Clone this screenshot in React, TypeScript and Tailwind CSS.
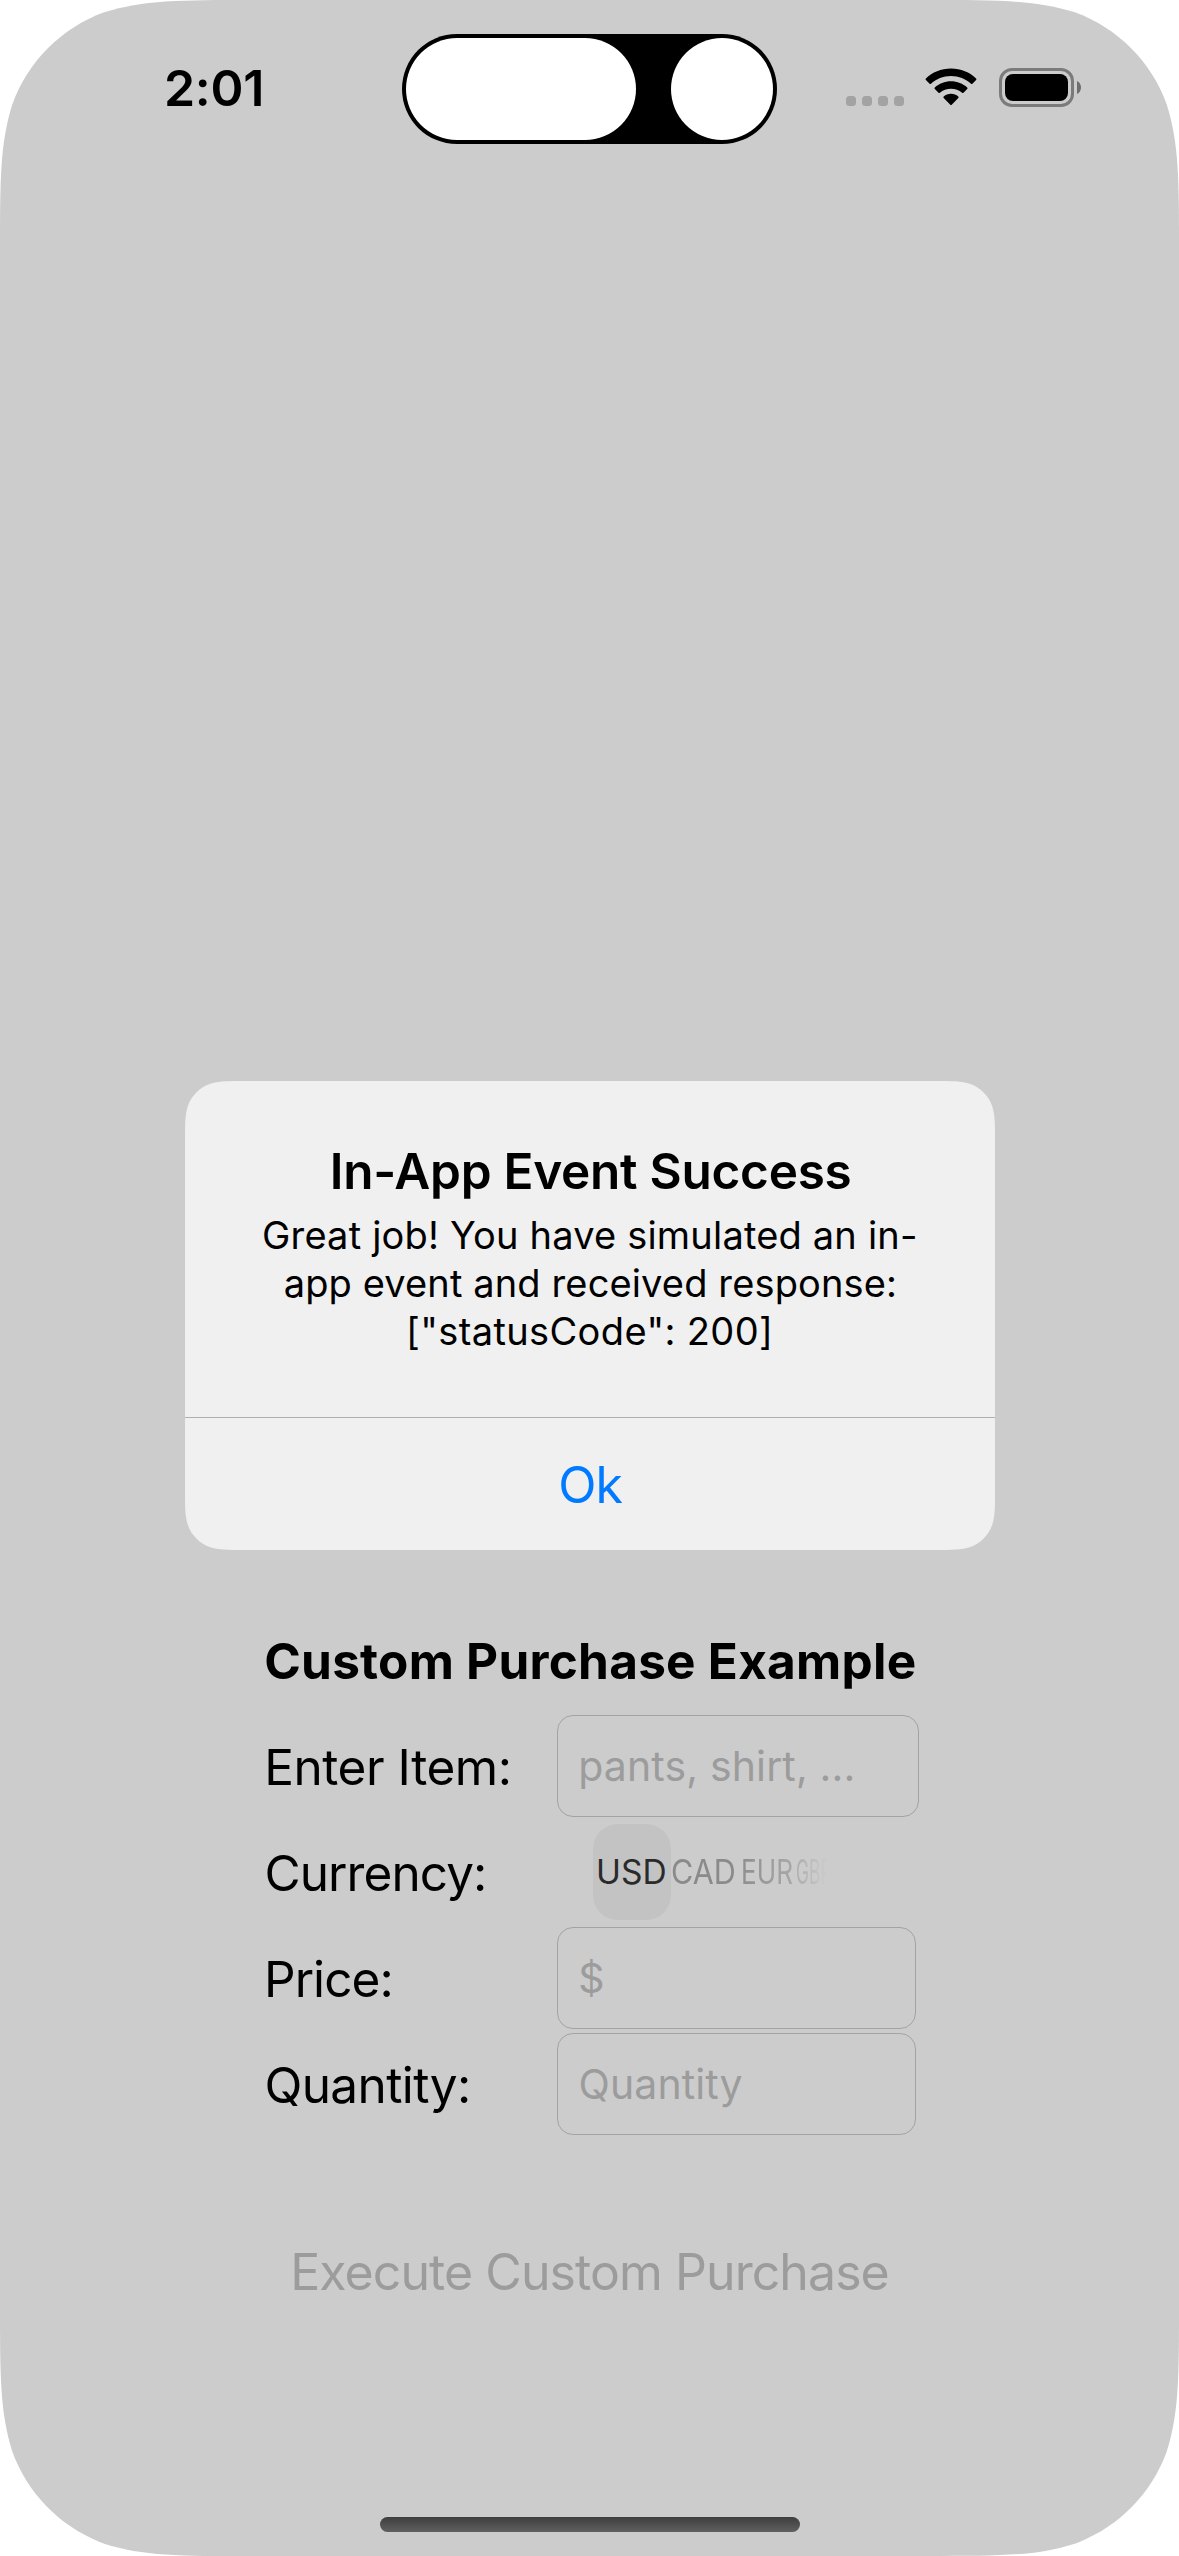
import type { CSSProperties, ReactNode } from "react";

/** Continuous-curvature rounded rectangle, as iOS draws it. */
function squircle(w: number, h: number, r: number): CSSProperties {
  const [a, b, c, d, e, f, g] = [
    1.528665, 1.08849296, 0.86840694, 0.63149379, 0.07491139, 0.37282383, 0.16905956,
  ].map((k) => +(k * r).toFixed(2));
  const path = [
    `M${a} 0H${w - a}`,
    `C${w - b} 0 ${w - c} 0 ${w - d} ${e}C${w - f} ${g} ${w - g} ${f} ${w - e} ${d}C${w} ${c} ${w} ${b} ${w} ${a}`,
    `V${h - a}`,
    `C${w} ${h - b} ${w} ${h - c} ${w - e} ${h - d}C${w - g} ${h - f} ${w - f} ${h - g} ${w - d} ${h - e}C${w - c} ${h} ${w - b} ${h} ${w - a} ${h}`,
    `H${a}`,
    `C${b} ${h} ${c} ${h} ${d} ${h - e}C${f} ${h - g} ${g} ${h - f} ${e} ${h - d}C0 ${h - c} 0 ${h - b} 0 ${h - a}`,
    `V${a}`,
    `C0 ${b} 0 ${c} ${e} ${d}C${g} ${f} ${f} ${g} ${d} ${e}C${c} 0 ${b} 0 ${a} 0Z`,
  ].join("");
  return { clipPath: `path("${path}")` };
}

function WifiIcon() {
  return (
    <svg className="h-[38px] w-[52px]" viewBox="0 0 52 38" fill="#000">
      <path d="M26 0.6C16.2 0.6 7.2 4.4 0.9 10.5Q0.2 11.3 0.9 12L4.6 15.8Q5.3 16.4 6 15.8C11.2 10.9 18.2 8 26 8C33.8 8 40.8 10.9 46 15.8Q46.7 16.4 47.4 15.8L51.1 12Q51.8 11.3 51.1 10.5C44.8 4.4 35.8 0.6 26 0.6Z" />
      <path d="M26 13.2C19.8 13.2 14.1 15.6 9.8 19.4Q9 20.2 9.8 21L13.5 24.8Q14.2 25.4 14.9 24.8C17.9 22.2 21.8 20.7 26 20.7C30.2 20.7 34.1 22.2 37.1 24.8Q37.8 25.4 38.5 24.8L42.2 21Q43 20.2 42.2 19.4C37.9 15.6 32.2 13.2 26 13.2Z" />
      <path d="M26 25.8C23.2 25.8 20.7 26.8 18.7 28.4Q17.9 29.2 18.7 30L25.3 36.8Q26 37.5 26.7 36.8L33.3 30Q34.1 29.2 33.3 28.4C31.3 26.8 28.8 25.8 26 25.8Z" />
    </svg>
  );
}

function BatteryIcon() {
  return (
    <div className="flex items-center gap-[3px]">
      <div className="h-[39px] w-[75px] rounded-[13px] border-[3px] border-[#7b7b7b] p-[3px]">
        <div className="size-full rounded-[8px] bg-black" />
      </div>
      <svg className="h-[13px] w-[4px]" viewBox="0 0 4 13" fill="#6e6e6e">
        <path d="M0 0C2.5 1 4 3.6 4 6.5C4 9.4 2.5 12 0 13Z" />
      </svg>
    </div>
  );
}

function StatusBar() {
  return (
    <header className="flex h-[178px] items-start">
      <div className="mt-[58px] w-[401.8px] pl-[164px] text-[50px] leading-[60px] font-semibold tracking-[-0.3px]">
        2:01
      </div>
      <div className="mt-[33.6px] flex h-[110.6px] w-[375.4px] items-center justify-between rounded-full bg-black px-[3.9px]">
        <div className="h-[102.6px] w-[230.8px] rounded-full bg-white" />
        <div className="size-[102.6px] rounded-full bg-white" />
      </div>
      <div className="mt-[68px] ml-[68.8px] flex gap-[6px] pt-[28px]">
        <span className="size-[10px] rounded-[3.5px] bg-[#a3a3a3]" />
        <span className="size-[10px] rounded-[3.5px] bg-[#a3a3a3]" />
        <span className="size-[10px] rounded-[3.5px] bg-[#a3a3a3]" />
        <span className="size-[10px] rounded-[3.5px] bg-[#a3a3a3]" />
      </div>
      <div className="mt-[68.4px] ml-[21.5px]">
        <WifiIcon />
      </div>
      <div className="mt-[68px] ml-[21.5px]">
        <BatteryIcon />
      </div>
    </header>
  );
}

function Alert() {
  return (
    <section
      role="alertdialog"
      className="mt-[903px] ml-[185px] flex h-[469px] w-[810px] flex-col bg-[linear-gradient(to_right,#f0f0f0_0%,#eff0ef_11%,#f0f0f0_18%,#f0f0f0_80%,#eff0ef_90%,#eff0ef_100%)]"
      style={squircle(810, 469, 39)}
    >
      <div className="h-[336px] pt-[60px] whitespace-nowrap text-black">
        <h2 className="pl-[144.7px] text-[49.5px] leading-[61px] font-semibold tracking-[-0.26px]">
          In-App Event Success
        </h2>
        <div className="mt-[9px] text-[38px] leading-[48px]">
          <p className="pl-[77px] tracking-[0.19px]">Great job! You have simulated an in-</p>
          <p className="pl-[98.7px] tracking-[0.13px]">app event and received response:</p>
          <p className="pl-[221px] tracking-[0.37px]">["statusCode": 200]</p>
        </div>
      </div>
      <div className="h-px bg-[#b0b0b0]" />
      <button className="h-[132px] pl-[373.2px] text-left text-[50px] leading-[134px] tracking-[-0.8px] text-[#007aff]">
        Ok
      </button>
    </section>
  );
}

function Row({ label, children }: { label: ReactNode; children: ReactNode }) {
  return (
    <div className="flex h-[102px] items-center">
      <div className="w-[294px] pt-[2px] text-[49.5px] leading-[60px]">{label}</div>
      {children}
    </div>
  );
}

function CurrencyPicker() {
  return (
    <div className="flex h-[102px] items-center pl-[36.3px] text-[33.5px] leading-[40px]">
      <div className="flex h-[96px] w-[77.4px] items-center rounded-[25px] bg-[#c3c3c3] pl-[2.8px] text-[#2a2a2a]">
        USD
      </div>
      <div className="w-[70px] pl-[0.8px]">
        <span className="inline-block origin-left scale-x-[0.91] text-[#8a8a8a]">CAD</span>
      </div>
      <div className="w-[55px] pl-[0.8px]">
        <span className="inline-block origin-left scale-x-[0.78] bg-linear-to-r from-[#8e8e8e] to-[#a8a8a8] bg-clip-text text-transparent">
          EUR
        </span>
      </div>
      <div className="w-[40px] pl-[0.8px]">
        <span className="inline-block origin-left scale-x-[0.52] bg-linear-to-r from-[#adadad] to-[#cccccc] to-90% bg-clip-text text-transparent">
          GBP
        </span>
      </div>
    </div>
  );
}

function Form() {
  return (
    <main className="mt-[81px] ml-[263px] whitespace-nowrap text-black">
      <h1 className="pl-[1.2px] text-[49.5px] leading-[60px] font-bold tracking-[0.26px]">
        Custom Purchase Example
      </h1>
      <div className="mt-[24px] flex flex-col gap-[4px]">
        <Row label={<span className="pl-[1.2px] tracking-[-0.45px]">Enter Item:</span>}>
          <div className="h-[102px] w-[362px] rounded-[16px] border border-[#a3a3a3] pl-[20.2px] text-[41px] leading-[100px] tracking-[0.14px] text-[#9c9c9c]">
            pants, shirt, ...
          </div>
        </Row>
        <Row label={<span className="pl-[1.4px] tracking-[-0.9px]">Currency:</span>}>
          <CurrencyPicker />
        </Row>
        <Row label={<span className="pl-[1px] tracking-[-0.95px]">Price:</span>}>
          <div className="h-[102px] w-[359px] rounded-[16px] border border-[#a3a3a3] pl-[20.2px] text-[41px] leading-[100px] text-[#9c9c9c]">
            $
          </div>
        </Row>
        <Row label={<span className="pl-[1.4px] tracking-[-0.58px]">Quantity:</span>}>
          <div className="h-[102px] w-[359px] rounded-[16px] border border-[#a3a3a3] pl-[20.5px] text-[41px] leading-[100px] tracking-[0.1px] text-[#9c9c9c]">
            Quantity
          </div>
        </Row>
      </div>
      <button className="mt-[107px] block pl-[27.2px] text-[50px] leading-[60px] tracking-[-0.93px] text-[#9c9c9c]">
        Execute Custom Purchase
      </button>
    </main>
  );
}

export default function App() {
  return (
    <div className="h-[2556px] w-[1179px] overflow-hidden bg-white font-['Inter',sans-serif] text-black">
      <div className="flex h-full flex-col bg-[#cccccc]" style={squircle(1179, 2556, 165)}>
        <StatusBar />
        <Alert />
        <Form />
        <div className="mt-auto mb-[24px] ml-[380px] h-[15px] w-[420px] rounded-full bg-linear-to-b from-[#3e3e3e] to-[#606060]" />
      </div>
    </div>
  );
}
